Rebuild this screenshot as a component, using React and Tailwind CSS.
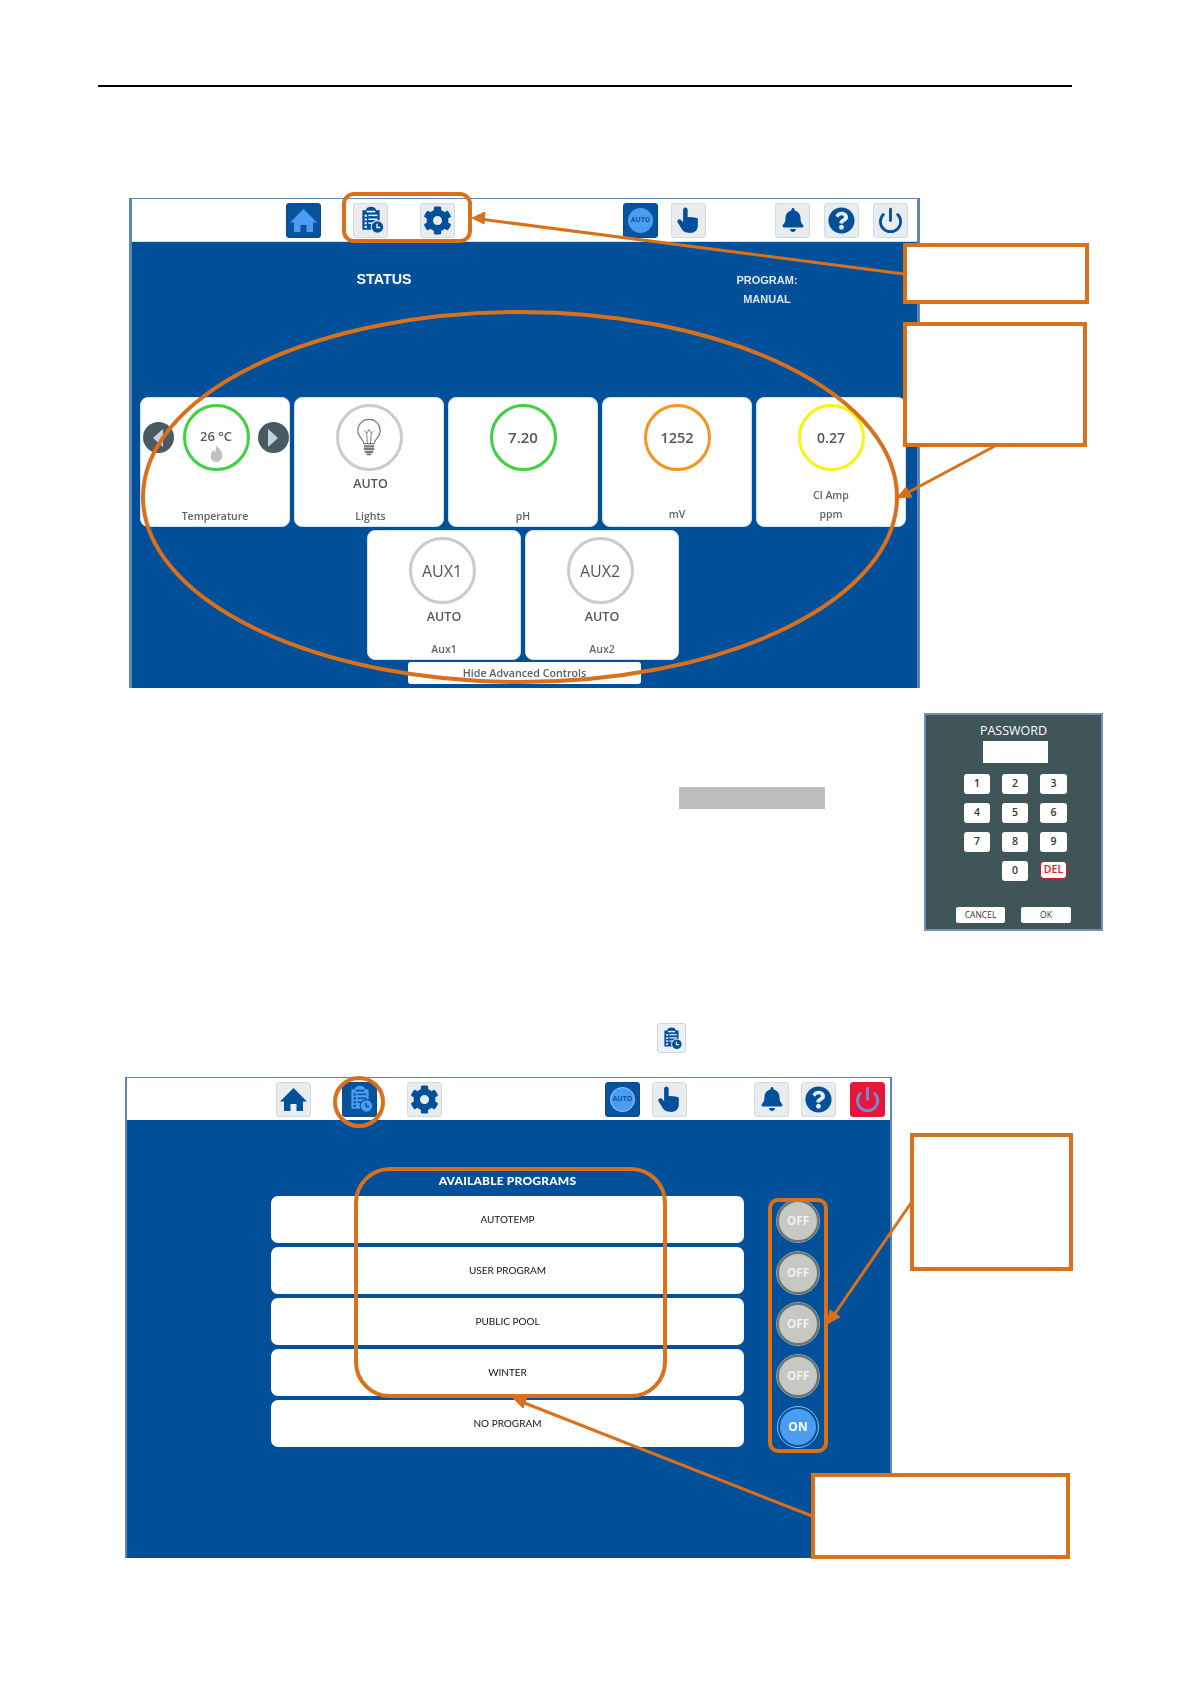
import React from "react";
import { FaCog, FaBell, FaQuestionCircle } from "react-icons/fa";
import { Power } from "lucide-react";

const BLUE = "#03509a";

function ClipboardClock({ color = BLUE, size = 28, cut = "#e9ecee" }) {
  return (
    <svg width={size} height={size} viewBox="0 0 26 26">
      <path d="M5 4h3.2a4.8 3.4 0 0 1 9.6 0H21v11h-1.5v7H5z" fill={color} />
      <rect x="9" y="4.4" width="8" height="1.6" fill={cut} />
      <g fill={cut}>
        <rect x="7" y="8" width="2.2" height="2" />
        <rect x="10.5" y="8" width="8.5" height="1.4" />
        <rect x="7" y="11.5" width="2.2" height="2" />
        <rect x="10.5" y="11.6" width="8.5" height="1.4" />
        <rect x="7" y="15" width="2.2" height="2" />
        <rect x="10.5" y="15.2" width="4" height="1.4" />
        <rect x="7" y="18.4" width="2.2" height="2" />
      </g>
      <circle cx="19" cy="19.5" r="6.4" fill={cut} />
      <circle cx="19" cy="19.5" r="5.4" fill={color} />
      <path d="M18.6 16.5v3.4h3" stroke={cut} strokeWidth="1.3" fill="none" />
    </svg>
  );
}

function HomeIcon({ color = BLUE }) {
  return (
    <svg width="29" height="27" viewBox="0 0 29 27">
      <path d="M14.5 2L1 15.5h4V25h6.5v-7h6v7H24v-9.5h4z" fill={color} />
    </svg>
  );
}

function HandIcon({ color = BLUE }) {
  return (
    <svg width="25" height="29" viewBox="0 0 24 28">
      <path
        d="M9 1.5c1.2 0 2.2 1 2.2 2.2V11c.6-.5 1.5-.5 2.2 0 .7-.5 1.8-.5 2.5.2.8-.4 1.9-.3 2.6.3.8-.3 1.9 0 2.5.8v6.7c0 4.2-3 7-7.5 7s-6.5-1.3-8.5-4.5L1.5 16c-.7-1.2-.2-2.4.8-2.9 1-.5 2.2-.2 3 .8l1.5 1.8V3.7C6.8 2.5 7.8 1.5 9 1.5z"
        fill={color}
      />
    </svg>
  );
}

function Flame() {
  return (
    <svg width="15" height="17" viewBox="0 0 16 18">
      <path d="M8 0c1 3 5 5 6 9 1 5-2 9-6 9s-7-3-6-8c.5-2 2-3 2-5 1 1 2 2 2 3 1-2 2-5 2-8z" fill="#bfc1c1" />
    </svg>
  );
}

function Bulb() {
  return (
    <svg width="28" height="40" viewBox="0 0 30 42" fill="none" stroke="#75797c" strokeWidth="1.3">
      <path d="M9.5 27c0-4-6.5-7-6.5-14a12 12 0 0 1 24 0c0 7-6.5 10-6.5 14z" />
      <path d="M10 13l2.5 3 2.5-4 2.5 4 2.5-3M12.5 16l1 11M17.5 16l-1 11" strokeWidth="1" />
      <path d="M9.5 30h11M9.5 33h11M10.5 36h9" strokeWidth="2.4" />
      <path d="M12.5 38.5h5" strokeWidth="2" />
    </svg>
  );
}

function NavBtn({ active, danger, children, className = "" }) {
  const look = danger
    ? "bg-[#e8173a] border-[#e8173a]"
    : active
    ? "bg-[#07539e] border-[#0b4a8a]"
    : "bg-[#e9ecee] border-[#d6dbde]";
  return (
    <div className={`flex h-[35px] w-[35px] shrink-0 items-center justify-center rounded-[3px] border ${look} ${className}`}>
      {children}
    </div>
  );
}

function AutoDisc({ ring }) {
  return (
    <div className={`flex h-[25px] w-[25px] items-center justify-center rounded-full bg-[#4a9df0] text-[7px] font-bold text-[#0a55a0] ${ring ? "border border-[#9cc9f5]" : ""}`}>
      AUTO
    </div>
  );
}

function Ring({ color, children, top }) {
  return (
    <div className={`flex h-[67px] w-[67px] shrink-0 flex-col items-center rounded-full border-[3px] bg-white ${top ? "justify-start" : "justify-center"}`} style={{ borderColor: color }}>
      {children}
    </div>
  );
}

function Card({ ring, sub, label, wide, extraLabel, left, right, low }) {
  return (
    <div className={`flex h-[130px] ${wide ? "w-[154px]" : "w-[150px]"} flex-col items-center rounded-[8px] border border-[#cfe2f5] bg-white pt-[6px] text-[#505659]`}>
      <div className={`flex w-full items-center justify-center ${wide ? "pr-[4px]" : ""}`}>
        {left}
        {ring}
        {right}
      </div>
      <div className={`mt-[3px] h-[20px] text-[12.5px] font-semibold leading-[20px] ${wide ? "" : "pl-[3px]"}`}>{sub}</div>
      <div className={`mt-auto flex flex-col items-center text-[10.5px] font-semibold leading-[19px] text-[#5f6568] ${low ? "pb-0" : "pb-[2px]"} ${sub && !wide ? "pl-[3px]" : ""}`}>
        {extraLabel && <div>{extraLabel}</div>}
        <div>{label}</div>
      </div>
    </div>
  );
}

function RoundArrow({ dir, className = "" }) {
  return (
    <div className={`flex h-[31px] w-[31px] shrink-0 items-center justify-center rounded-full bg-[#4a5a63] ${className}`}>
      <svg width="14" height="20" viewBox="0 0 14 20">
        <path d={dir === "left" ? "M12 1v18L2 10z" : "M2 1v18l10-9z"} fill="#c5d3dc" />
      </svg>
    </div>
  );
}

function Key({ children }) {
  return (
    <div className="flex h-[20px] items-center justify-center rounded-[3px] bg-white text-[10.5px] font-semibold text-[#333]">
      {children}
    </div>
  );
}

function Toggle({ on }) {
  if (on) {
    return (
      <div className="flex h-[42px] w-[42px] items-center justify-center rounded-full border border-[#8fc0f0] p-[2px]">
        <div className="flex h-full w-full items-center justify-center rounded-full bg-[#4a9df0] font-['Open_Sans',sans-serif] text-[12px] font-bold text-white">ON</div>
      </div>
    );
  }
  return (
    <div className="flex h-[42px] w-[42px] items-center justify-center rounded-full border-2 border-[#6c7472] bg-[#c6c8c3] font-['Open_Sans',sans-serif] text-[12px] font-bold text-[#f2f2ee] outline outline-1 outline-[#9aa09e]">
      OFF
    </div>
  );
}

function ProgramRow({ children }) {
  return (
    <div className="flex h-[47px] items-center justify-center rounded-[7px] bg-white text-[10px] text-[#111]">
      {children}
    </div>
  );
}

function Orange({ className }) {
  return <div className={`absolute border-[4px] border-[#d9701b] ${className}`} />;
}

export default function App() {
  return (
    <div className="relative flex h-[1684px] w-[1191px] flex-col overflow-hidden bg-white font-['Open_Sans',sans-serif]">
      <div className="ml-[98px] mt-[85px] h-[2px] w-[974px] bg-black" />

      {/* first screen */}
      <div className="ml-[129px] mt-[111px] flex h-[490px] w-[791px] flex-col border-x-[3px] border-t border-x-[#5f86b8] border-t-[#5f83aa] bg-[#03509a] blur-[0.5px]">
        <div className="flex h-[43px] shrink-0 items-center border-b border-[#cfe2f5] bg-white pl-[154px]">
          <NavBtn active><HomeIcon color="#4a9df0" /></NavBtn>
          <NavBtn className="ml-[32px]"><ClipboardClock /></NavBtn>
          <NavBtn className="ml-[32px]"><FaCog size={29} color={BLUE} /></NavBtn>
          <NavBtn active className="ml-[168px]"><AutoDisc /></NavBtn>
          <NavBtn className="ml-[13px]"><HandIcon /></NavBtn>
          <NavBtn className="ml-[69px]"><FaBell size={24} color={BLUE} /></NavBtn>
          <NavBtn className="ml-[14px]"><FaQuestionCircle size={27} color={BLUE} /></NavBtn>
          <NavBtn className="ml-[14px]"><Power size={27} color={BLUE} strokeWidth={2.5} /></NavBtn>
        </div>
        <div className="flex h-[155px] shrink-0 items-start font-['Liberation_Sans',sans-serif] font-bold text-white">
          <div className="ml-[222px] mt-[27px] w-[60px] text-center text-[14.3px] leading-[20px]">STATUS</div>
          <div className="ml-[313px] mt-[29px] w-[80px] text-center text-[11px] leading-[19px] text-[#dbe6f2]">
            PROGRAM:
            <br />
            MANUAL
          </div>
        </div>
        <div className="ml-[8px] flex gap-[4px]">
          <Card
            low
            ring={<Ring top color="#3fd13f"><div className="mt-[21px] h-[17px] text-[13px] font-semibold leading-[17px] text-[#555b5e]">26 °C</div><Flame /></Ring>}
            left={<RoundArrow dir="left" className="mr-[9px] ml-[3px]" />}
            right={<RoundArrow dir="right" className="ml-[8px] mr-[2px]" />}
            label="Temperature"
          />
          <Card low ring={<Ring color="#c9cbcc"><Bulb /></Ring>} sub="AUTO" label="Lights" />
          <Card low ring={<Ring color="#3fd13f"><span className="text-[15px] font-semibold">7.20</span></Ring>} label="pH" />
          <Card ring={<Ring color="#f7931e"><span className="text-[14.5px] font-semibold">1252</span></Ring>} label="mV" />
          <Card ring={<Ring color="#f5f50f"><span className="text-[14px] font-semibold">0.27</span></Ring>} extraLabel="Cl Amp" label="ppm" />
        </div>
        <div className="ml-[235px] mt-[3px] flex gap-[4px]">
          <Card wide low ring={<Ring color="#c9cbcc"><span className="text-[16px] font-medium">AUX1</span></Ring>} sub="AUTO" label="Aux1" />
          <Card wide low ring={<Ring color="#c9cbcc"><span className="text-[16px] font-medium">AUX2</span></Ring>} sub="AUTO" label="Aux2" />
        </div>
        <div className="ml-[276px] mt-[2px] flex h-[22px] w-[233px] items-center justify-center rounded-[3px] bg-white text-[10.7px] font-semibold text-[#5a6063]">
          Hide Advanced Controls
        </div>
      </div>

      {/* grey bar and password panel */}
      <div className="ml-[679px] mt-[25px] flex items-start">
        <div className="mt-[74px] h-[22px] w-[146px] bg-[#bdbdbd]" />
        <div className="ml-[99px] flex h-[218px] w-[179px] flex-col items-center border-2 border-[#7590b5] bg-[#3f5558]">
          <div className="mt-[6px] text-[12.5px] font-medium leading-[20px] text-white">PASSWORD</div>
          <div className="ml-[4px] h-[22px] w-[65px] bg-white" />
          <div className="ml-[4px] mt-[11px] grid grid-cols-[26px_26px_27px] gap-x-[12px] gap-y-[9px]">
            <Key>1</Key><Key>2</Key><Key>3</Key>
            <Key>4</Key><Key>5</Key><Key>6</Key>
            <Key>7</Key><Key>8</Key><Key>9</Key>
            <div />
            <Key>0</Key>
            <div className="flex h-[18px] items-center justify-center rounded-[4px] border border-[#e0142c] bg-white text-[10.5px] font-semibold text-[#e0142c]">DEL</div>
          </div>
          <div className="mt-[26px] flex gap-[16px]">
            <div className="flex h-[16px] w-[49px] items-center justify-center rounded-[2px] bg-white text-[8.5px] text-[#333]">CANCEL</div>
            <div className="flex h-[16px] w-[50px] items-center justify-center rounded-[2px] bg-white text-[8.5px] text-[#333]">OK</div>
          </div>
        </div>
      </div>

      {/* inline programs icon */}
      <div className="ml-[657px] mt-[92px] flex h-[30px] w-[29px] items-center justify-center rounded-[3px] border border-[#cfd6db] bg-[#eef1f3]">
        <ClipboardClock size={23} />
      </div>

      {/* second screen */}
      <div className="ml-[125px] mt-[24px] flex h-[481px] w-[767px] flex-col border-x-2 border-t border-x-[#5f86b8] border-t-[#5f83aa] bg-[#03509a] blur-[0.4px]">
        <div className="flex h-[42px] shrink-0 items-center bg-white pl-[149px]">
          <NavBtn><HomeIcon /></NavBtn>
          <NavBtn active className="ml-[31px]"><ClipboardClock color="#4a9df0" cut="#07539e" /></NavBtn>
          <NavBtn className="ml-[30px]"><FaCog size={29} color={BLUE} /></NavBtn>
          <NavBtn active className="ml-[163px]"><AutoDisc ring /></NavBtn>
          <NavBtn className="ml-[12px]"><HandIcon /></NavBtn>
          <NavBtn className="ml-[67px]"><FaBell size={24} color={BLUE} /></NavBtn>
          <NavBtn className="ml-[12px]"><FaQuestionCircle size={27} color={BLUE} /></NavBtn>
          <NavBtn danger className="ml-[14px]"><Power size={27} color="#6d8fd8" strokeWidth={2.5} /></NavBtn>
        </div>
        <div className="ml-[144px] mt-[76px] flex items-start font-['Lato',sans-serif]">
          <div className="relative flex w-[473px] flex-col gap-[4px]">
            <div className="absolute left-0 right-0 top-[-24px] text-center text-[12px] font-black leading-[18px] tracking-[0.2px] text-white">
              AVAILABLE PROGRAMS
            </div>
            <ProgramRow>AUTOTEMP</ProgramRow>
            <ProgramRow>USER PROGRAM</ProgramRow>
            <ProgramRow>PUBLIC POOL</ProgramRow>
            <ProgramRow>WINTER</ProgramRow>
            <ProgramRow>NO PROGRAM</ProgramRow>
          </div>
          <div className="ml-[33px] mt-[4px] flex flex-col gap-[9.5px]">
            <Toggle />
            <Toggle />
            <Toggle />
            <Toggle />
            <Toggle on />
          </div>
        </div>
      </div>

      {/* annotation overlay */}
      <svg className="absolute left-0 top-0" width="1191" height="1684" fill="none" stroke="#d9701b" strokeWidth="4">
        <ellipse cx="520" cy="497" rx="377" ry="185" />
        <path d="M904 274L480 219" strokeWidth="3" />
        <path d="M472 218l13-6-1 12z" fill="#d9701b" strokeWidth="1" />
        <path d="M995 446L905 494" strokeWidth="3" />
        <path d="M897 498l9-11 6 10z" fill="#d9701b" strokeWidth="1" />
        <circle cx="359" cy="1102" r="24" />
        <path d="M911 1203L834 1315" strokeWidth="3" />
        <path d="M827 1324l3-14 10 7z" fill="#d9701b" strokeWidth="1" />
        <path d="M812 1516L522 1402" strokeWidth="3" />
        <path d="M513 1398l14-1-4 11z" fill="#d9701b" strokeWidth="1" />
      </svg>
      <Orange className="left-[342px] top-[192px] h-[51px] w-[130px] rounded-[12px]" />
      <Orange className="left-[354px] top-[1167px] h-[231px] w-[313px] rounded-[36px]" />
      <Orange className="left-[768px] top-[1198px] h-[255px] w-[60px] rounded-[10px]" />
      <Orange className="left-[903px] top-[243px] h-[61px] w-[186px] bg-white" />
      <Orange className="left-[903px] top-[322px] h-[125px] w-[184px] bg-white" />
      <Orange className="left-[910px] top-[1133px] h-[138px] w-[163px] bg-white" />
      <Orange className="left-[811px] top-[1473px] h-[86px] w-[259px] bg-white" />
    </div>
  );
}
